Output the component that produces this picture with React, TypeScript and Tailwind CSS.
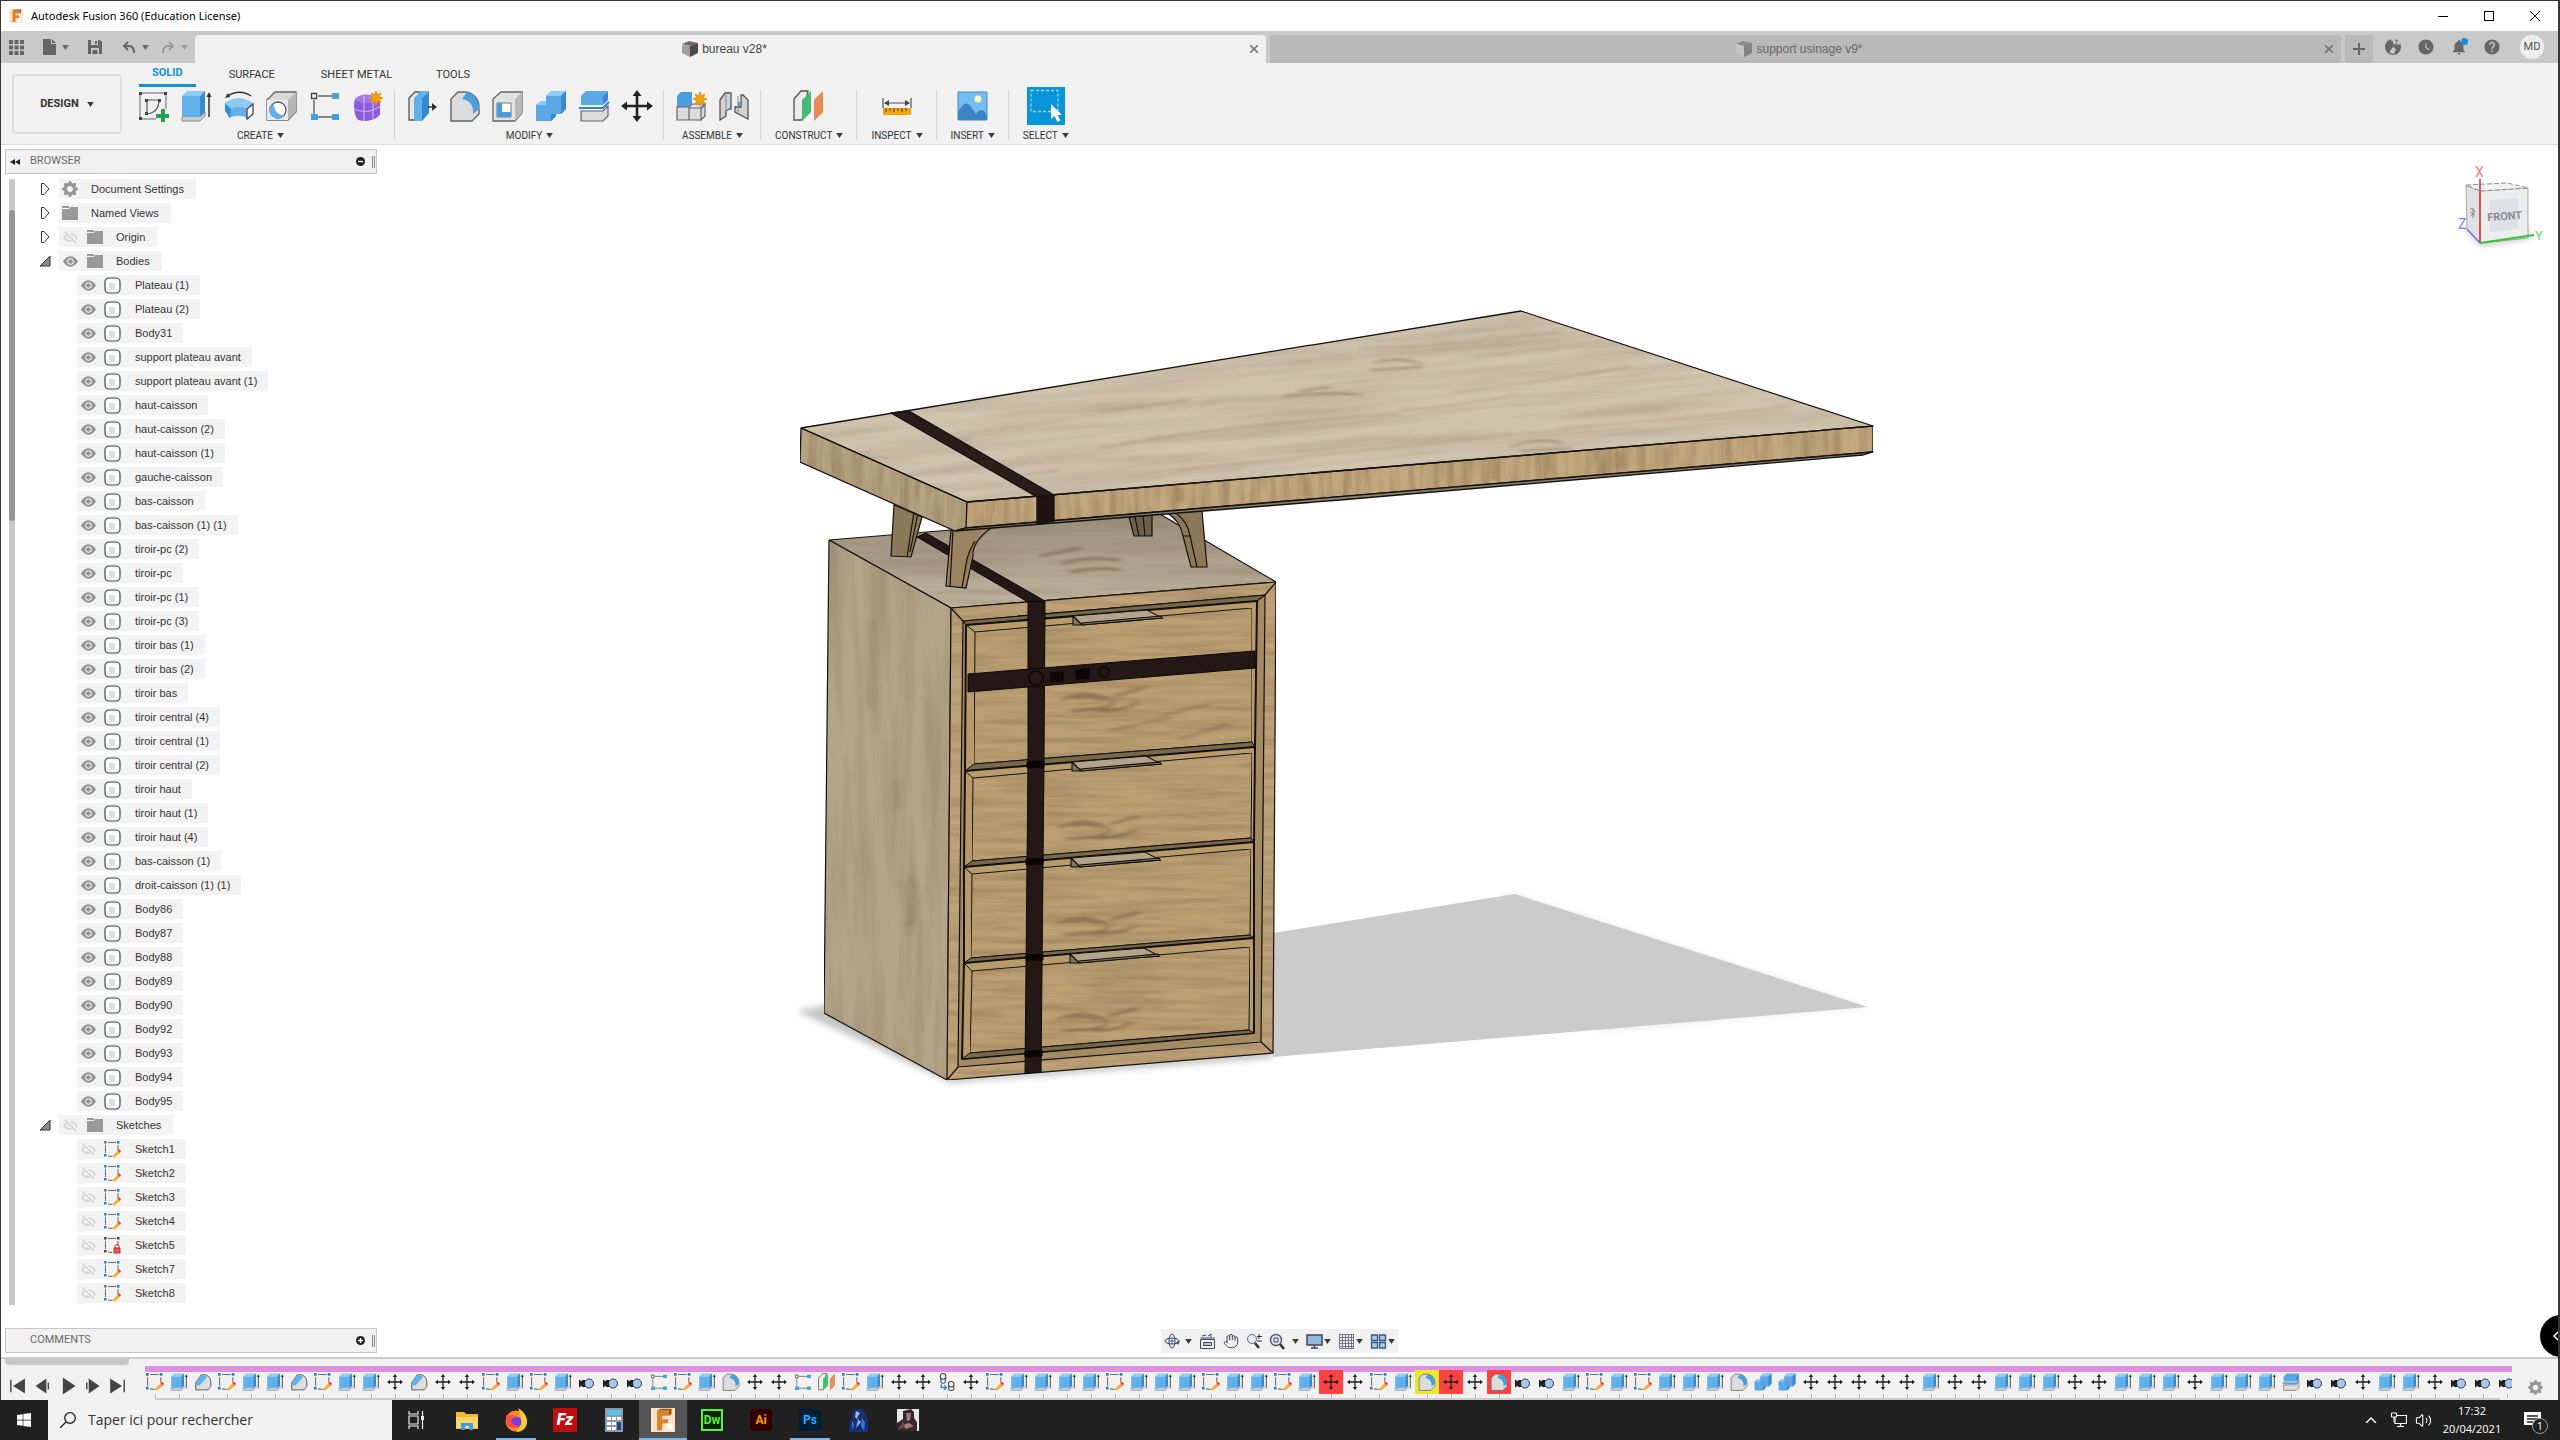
import type { ReactNode } from "react";
import { LuHand, LuVolume2 } from "react-icons/lu";
import { FaWindows } from "react-icons/fa";
import { BsGearFill, BsEyeFill } from "react-icons/bs";
import { MdHelp, MdNotifications, MdWatchLater } from "react-icons/md";

/* ---------- icons ---------- */

const Svg = ({ size = "size-8", box = "0 0 32 32", children }: { size?: string; box?: string; children: ReactNode }) => (
  <svg viewBox={box} className={`${size} shrink-0`} fill="none" aria-hidden="true">
    {children}
  </svg>
);

const Caret = ({ color = "text-[#3c3c3c]" }: { color?: string }) => (
  <svg viewBox="0 0 8 6" className={`h-[5px] w-[7px] shrink-0 ${color}`} aria-hidden="true">
    <path d="M0 0h8L4 6z" fill="currentColor" />
  </svg>
);

const Burst = ({ x, y, r = 7 }: { x: number; y: number; r?: number }) => (
  <g transform={`translate(${x} ${y}) scale(${r / 8})`}>
    <path
      d="M0-8 1.6-3.6 5.6-5.6 3.8-1.6 8 0 3.8 1.6 5.6 5.6 1.6 3.6 0 8-1.6 3.6-5.6 5.6-3.8 1.6-8 0-3.8-1.6-5.6-5.6-1.6-3.6z"
      fill="#f0a30a"
      stroke="#e0910a"
    />
  </g>
);

const BigSketch = () => (
  <Svg>
    <path d="M3 3h26v16M3 3v26h16" stroke="#666" strokeWidth="1" />
    <path d="M10 10h14M10 10v15M22 10c0 8-4 13-12 14" stroke="#555" strokeWidth="1.2" />
    <path d="M2 2h3v3H2zM27 2h3v3h-3zM2 27h3v3H2zM8 9h3v3H8zM21 9h3v3h-3zM8 22h3v3H8z" fill="#444" />
    <path d="M24 19h4v5h5v4h-5v5h-4v-5h-5v-4h5z" fill="#23a04b" />
  </Svg>
);

const Extrude = ({ size }: { size?: string }) => (
  <Svg size={size}>
    <path d="M2 27v4h18l5-5v-4z" fill="#ccc" stroke="#8a8a8a" />
    <path d="M2 6v21h18V6z" fill="#63b1ea" />
    <path d="M2 6l5-5h18l-5 5z" fill="#8ccbf5" />
    <path d="M20 6l5-5v21l-5 5z" fill="#3689cf" />
    <path d="M29 27V4" stroke="#333" strokeWidth="1.5" />
    <path d="M26.500 7L29 2l2.500 5z" fill="#333" />
  </Svg>
);

const Revolve = () => (
  <Svg>
    <path d="M2 13c8-6 19-6 28 0l-2 5-4 10c-5-3-12-3-18 0z" fill="#63b1ea" />
    <path d="M2 13c8-6 19-6 28 0l-6 6c-5-3-11-3-16 0z" fill="#8ccbf5" />
    <path d="M30 14l-6 5v10l6-5z" fill="#fff" stroke="#444" strokeWidth="1.3" />
    <path d="M2 13l6 6-1 9-5-7z" fill="#3689cf" />
    <path d="M5 6c7-5 16-5 23 0" stroke="#333" strokeWidth="1.3" />
    <path d="M2 8l3-5 2 4z" fill="#333" />
  </Svg>
);

const Hole = () => (
  <Svg>
    <path d="M1 10l8-8h21v20l-8 8H1z" fill="#d9d9d9" stroke="#666" strokeWidth="1.3" />
    <path d="M1 10h21v20H1z" fill="#e9e9e9" />
    <path d="M22 10l8-8v20l-8 8z" fill="#b5b5b5" />
    <circle cx="12" cy="20" r="8" fill="#fff" stroke="#555" strokeWidth="1.3" />
    <path d="M8 13.500c0 7 3 11 10 12A8 8 0 1 1 8 13.500z" fill="#63b1ea" />
  </Svg>
);

const Pattern = ({ size }: { size?: string }) => (
  <Svg size={size}>
    <path d="M9 6h14M5 10v14M9 27h14" stroke="#666" strokeWidth="1.4" />
    <path d="M2.500 3.500h5v5h-5z" fill="#fff" stroke="#444" strokeWidth="1.4" />
    <path d="M23 3h7v6h-7zM2 24h7v6H2zM23 24h7v6h-7z" fill="#4a9edd" />
  </Svg>
);

const Form = () => (
  <Svg>
    <path d="M3 9c5-6 17-6 25 0v15c-3 6-14 8-21 6-5-2-6-16-4-21z" fill="#a578e6" />
    <path d="M3 10c5 4 12 4 17 2l8-4v16c-3 6-14 8-21 6-5-2-5-16-4-20z" fill="#8e5cdb" />
    <path d="M2 19c7 3 14 3 19 1l8-4M12 6v25M21 8v22" stroke="#d5bdf7" strokeWidth="1" />
    <Burst x={24} y={8} />
  </Svg>
);

const PressPull = () => (
  <Svg>
    <path d="M3 8l6-6h5v28H3z" fill="#e6e6e6" stroke="#555" strokeWidth="1.3" />
    <path d="M8 8l7-7h8l-7 7v23H8z" fill="#63b1ea" />
    <path d="M16 8l7-7v22l-7 8z" fill="#3689cf" />
    <path d="M22 17h6" stroke="#333" strokeWidth="1.4" />
    <path d="M26 13l5 4-5 4z" fill="#333" />
  </Svg>
);

const Fillet = ({ size }: { size?: string }) => (
  <Svg size={size}>
    <path d="M2 9l7-7h7c9 1 14 7 14 15v7l-7 7H2z" fill="#dcdcdc" stroke="#666" strokeWidth="1.4" />
    <path d="M13 9l5-7c8 2 12 8 12 17l-6 5c1-9-4-14-11-15z" fill="#4a9edd" />
  </Svg>
);

const Chamfer = ({ size }: { size?: string }) => (
  <Svg size={size}>
    <path d="M3 17L13 3h8c5 2 9 7 9 13v8l-5 6H3z" fill="#dedede" stroke="#555" strokeWidth="1.6" />
    <path d="M3 17L13 3h6l4 4-13 15H3z" fill="#63b1ea" />
  </Svg>
);

const Shell = () => (
  <Svg>
    <path d="M1 9l8-7h21v21l-7 8H1z" fill="#e3e3e3" stroke="#666" strokeWidth="1.3" />
    <path d="M23 9l7-7v21l-7 8z" fill="#b9b9b9" />
    <path d="M5 13h14v14H5z" fill="#fff" stroke="#777" />
    <path d="M5 13h5v9h9v5H5z" fill="#4a9edd" />
  </Svg>
);

const Combine = ({ size }: { size?: string }) => (
  <Svg size={size}>
    <path d="M1 15l5-4h5V6l5-5h15v18l-5 5h-5v2l-5 5H1z" fill="#5aa9e6" />
    <path d="M11 6l5-5h15l-5 5zM1 15l5-4h5v4z" fill="#8ccbf5" />
    <path d="M26 6l5-5v18l-5 5zM21 24v2l-5 5v-7z" fill="#3689cf" />
  </Svg>
);

const Split = ({ size }: { size?: string }) => (
  <Svg size={size}>
    <path d="M3 6l5-5h22l-5 5v9H3z" fill="#5aa9e6" />
    <path d="M25 6l5-5v9l-5 5z" fill="#3689cf" />
    <path d="M1 18h24l6-6" stroke="#2e86cc" strokeWidth="2" />
    <path d="M3 21h22l5-5v10l-5 5H3z" fill="#dcdcdc" stroke="#666" strokeWidth="1.2" />
  </Svg>
);

const Move = ({ size }: { size?: string }) => (
  <Svg size={size}>
    <path d="M16 4v24M4 16h24" stroke="#222" strokeWidth="2.600" />
    <path d="M16 0l4.500 6h-9zM16 32l4.500-6h-9zM0 16l6-4.500v9zM32 16l-6-4.500v9z" fill="#222" />
  </Svg>
);

const Component = () => (
  <Svg>
    <path d="M2 6l4-4h11v12l-4 3H2z" fill="#4a9edd" />
    <path d="M2 17h12v13H2zM14 17l3-3h13l-3 4H14zM14 18h12v12H14zM26 18l4-4v12l-4 4z" fill="#dcdcdc" stroke="#666" strokeWidth="1.200" />
    <Burst x={25} y={9} />
  </Svg>
);

const Joint = () => (
  <Svg>
    <path d="M2 10l5-7h6v15l-5 3v5l-6 4zM30 10l-5-5-2 0v12h-6v5l13 7z" fill="#d2d2d2" stroke="#555" strokeWidth="1.300" />
    <path d="M8 5v17M20 6v16" stroke="#888" />
    <path d="M13 15v5M21 12v5" stroke="#2e86cc" strokeWidth="1.400" />
  </Svg>
);

const Plane = ({ size }: { size?: string }) => (
  <Svg size={size}>
    <path d="M1 9l7-8h7L9 30H1z" fill="#ececec" stroke="#555" strokeWidth="1.3" />
    <path d="M9 10l9-9v21l-9 9z" fill="#45bb74" />
    <path d="M21 10l9-9v21l-9 9z" fill="#e58b56" />
  </Svg>
);

const Measure = () => (
  <Svg>
    <path d="M2 8v10M30 8v10M4 13h24" stroke="#555" strokeWidth="1.2" />
    <path d="M3 13l5-3v6zM29 13l-5-3v6z" fill="#444" />
    <path d="M2 18h28v7H2z" fill="#f2a50c" />
    <path d="M5 18v4M9 18v3M13 18v4M17 18v3M21 18v4M25 18v3" stroke="#744f07" strokeWidth="1.200" />
  </Svg>
);

const Picture = () => (
  <Svg>
    <path d="M1 2h29v28H1z" fill="#74bdf2" stroke="#4a89b8" />
    <path d="M1 22c5-9 9-11 13-5l5 7c3-5 7-6 11 1v5H1z" fill="#3d85c2" />
    <circle cx="21" cy="9" r="3.500" fill="#fdf6c0" />
  </Svg>
);

const SelectIcon = () => (
  <Svg size="size-[38px]" box="0 0 38 38">
    <path d="M0 0h38v38H0z" fill="#0a93d9" />
    <path d="M4 3.500h27v21H4z" stroke="#8fe3c0" strokeDasharray="3 2" strokeWidth="1.300" />
    <path d="M24 17v15l3.500-3 3 6 3-1.500-3-5.500h4.500z" fill="#fff" />
  </Svg>
);

const SketchIcon = ({ size = "size-[17px]", locked = false }: { size?: string; locked?: boolean }) => (
  <Svg size={size} box="0 0 17 17">
    <path d="M4 1.500h8M1.500 4v8M4 15l4 .5M14 4v5" stroke="#666" strokeWidth="1" />
    <path d="M0 0h2.500v2.500H0zM13 0h2.500v2.500H13zM0 13h2.500v2.500H0z" fill={locked ? "#444" : "#2b7fc4"} />
    {locked ? (
      <>
        <path d="M10 16h6v-5h-6z" fill="#e8605a" stroke="#b52a25" />
        <path d="M11 11V9.500c0-2.500 4-2.500 4 0V11" stroke="#b52a25" />
      </>
    ) : (
      <>
        <path d="M9 14.500l4.500-4.500 2.500 2-5 4-3 .5z" fill="#f3ae3d" />
        <path d="M13.500 10l1.500-2 2 2-1 2z" fill="#e2473c" />
      </>
    )}
  </Svg>
);

const HoleMark = ({ size }: { size?: string }) => (
  <Svg size={size}>
    <circle cx="20" cy="19" r="9" fill="#a9c8ee" stroke="#334" strokeWidth="2" />
    <path d="M0 11l6 4v-3h6v14H6v-3l-6 4z" fill="#222" />
  </Svg>
);

const CopyMark = ({ size }: { size?: string }) => (
  <Svg size={size}>
    <circle cx="9" cy="6" r="5" stroke="#444" strokeWidth="1.800" />
    <path d="M5 9v7c0 3 8 3 8 0V9M19 22v6c0 4 9 4 9 0v-6" stroke="#444" strokeWidth="1.800" />
    <circle cx="23.500" cy="20" r="5" stroke="#444" strokeWidth="1.800" />
    <path d="M6 20v6h8M11 22l4 4-4 4" stroke="#2b7fc4" strokeWidth="2.500" />
  </Svg>
);

const BodyIcon = () => (
  <Svg size="size-[17px]" box="0 0 17 17">
    <rect x="1" y="1" width="15" height="15" rx="4" fill="#fdfdfd" stroke="#414956" strokeWidth="1.200" />
    <path d="M5 6h6v7H5z" fill="#dcdfe4" />
  </Svg>
);

const FolderIcon = () => (
  <Svg size="size-4" box="0 0 16 16">
    <path d="M0 1h7v2H0zM0 4h7l1-2h8v13H0z" fill="#9a9a9a" />
  </Svg>
);

const CubeIcon = ({ faded = false }: { faded?: boolean }) => (
  <Svg size="size-4" box="0 0 16 16">
    <path d="M0 3l7-3 9 2-8 3z" fill={faded ? "#8b8b8b" : "#6b6b6b"} />
    <path d="M0 3l8 2v11l-8-4z" fill={faded ? "#c4c4c4" : "#a0a0a0"} />
    <path d="M8 5l8-3v10l-8 4z" fill={faded ? "#858585" : "#4a4a4a"} />
  </Svg>
);

/* ---------- title and tab bars ---------- */

const FusionLogo = ({ size }: { size: string }) => (
  <Svg size={size} box="0 0 28 28">
    <path d="M0 0h28v28H0z" fill="#fde3cb" />
    <path d="M7 3h14v6h-8v4h7v5h-7v8H7z" fill="#d9822b" />
    <path d="M7 3l4-2h13l-3 2zM21 3l3-2v6l-3 2z" fill="#9c5414" />
    <path d="M18 18h7v7h-7z" fill="#fff7ee" />
  </Svg>
);

const TitleBar = () => (
  <header className="flex h-[30px] shrink-0 items-center bg-white pl-2">
    <FusionLogo size="size-[14px]" />
    <h1 className="ml-2 flex-1 font-['Noto_Sans',sans-serif] text-[11px] text-black">
      Autodesk Fusion 360 (Education License)
    </h1>
    <div className="flex items-center gap-[14px] pr-[7px] text-black">
      <button aria-label="Minimize" className="flex size-8 items-center justify-center">
        <span className="h-px w-[10px] bg-black" />
      </button>
      <button aria-label="Maximize" className="flex size-8 items-center justify-center">
        <span className="size-[10px] border border-black" />
      </button>
      <button aria-label="Close" className="flex size-8 items-center justify-center">
        <Svg size="size-[10px]" box="0 0 10 10">
          <path d="M0 0l10 10M10 0L0 10" stroke="#000" />
        </Svg>
      </button>
    </div>
  </header>
);

const DocTab = ({ name, active = false }: { name: string; active?: boolean }) => (
  <div
    className={`mt-1 flex h-7 flex-1 items-center rounded-t-sm px-[6px] text-xs ${
      active ? "bg-[#f1f1f1] text-[#444]" : "bg-[#b9b9b9] text-[#666]"
    }`}
  >
    <button className="flex flex-1 items-center justify-center gap-1">
      <CubeIcon faded={!active} />
      {name}
    </button>
    <button aria-label={`Close ${name}`} className="p-[2px]">
      <Svg size="size-2" box="0 0 8 8">
        <path d="M0 0l8 8M8 0L0 8" stroke="#777" strokeWidth="1.600" />
      </Svg>
    </button>
  </div>
);

const TabBar = () => (
  <nav className="flex h-8 shrink-0 bg-[#c9c9c9] text-[#666]">
    <div className="flex w-[194px] items-center pl-2">
      <button aria-label="Data panel" className="w-[34px]">
        <Svg size="size-[15px]" box="0 0 15 15">
          <path d="M0 0h4v4H0zM5.500 0h4v4h-4zM11 0h4v4h-4zM0 5.500h4v4H0zM5.500 5.500h4v4h-4zM11 5.500h4v4h-4zM0 11h4v4H0zM5.500 11h4v4h-4zM11 11h4v4h-4z" fill="#666" />
        </Svg>
      </button>
      <button aria-label="File" className="flex w-[45px] items-center gap-[6px]">
        <Svg size="h-4 w-[13px]" box="0 0 13 16">
          <path d="M0 0h8v5h5v11H0zM9 0l4 4H9z" fill="#666" />
        </Svg>
        <Caret color="text-[#666]" />
      </button>
      <button aria-label="Save" className="w-[34px]">
        <Svg size="size-[14px]" box="0 0 14 14">
          <path d="M0 0h12l2 2v12H0z" fill="#666" />
          <path d="M3 0h7v5H3zM3 8h8v6H3z" fill="#c9c9c9" />
          <path d="M7 1h2v3H7zM4.500 10h5v4h-5z" fill="#666" />
        </Svg>
      </button>
      <button aria-label="Undo" className="flex w-[39px] items-center gap-[6px]">
        <Svg size="h-3 w-[14px]" box="0 0 14 12">
          <path d="M6 1L2 5l4 4M2 5h5c4 0 5 3 5 7" stroke="#666" strokeWidth="2" />
        </Svg>
        <Caret color="text-[#666]" />
      </button>
      <button aria-label="Redo" className="flex items-center gap-[6px]">
        <Svg size="h-3 w-[14px]" box="0 0 14 12">
          <path d="M8 1l4 4-4 4M12 5H7c-4 0-5 3-5 7" stroke="#999" strokeWidth="2" />
        </Svg>
        <Caret color="text-[#999]" />
      </button>
    </div>
    <div className="flex flex-1 gap-1">
      <DocTab name="bureau v28*" active />
      <DocTab name="support usinage v9*" />
      <button aria-label="New tab" className="mt-1 flex h-7 w-7 items-center justify-center bg-[#b9b9b9]">
        <Svg size="size-3" box="0 0 12 12">
          <path d="M6 0v12M0 6h12" stroke="#666" strokeWidth="2" />
        </Svg>
      </button>
    </div>
    <div className="flex w-[185px] items-center gap-[15px] pl-[11px]">
      <button aria-label="Extensions">
        <Svg size="size-[18px]" box="0 0 18 18">
          <circle cx="9" cy="9" r="8" fill="#666" />
          <path d="M9 9L7 1h4l1 3 3-1 2 3-5 1zM6 13l3-4 3 2-2 5-4-1z" fill="#c9c9c9" />
          <path d="M8 3l1 5 4-3" stroke="#666" strokeWidth="1.500" />
        </Svg>
      </button>
      <button aria-label="Job status">
        <MdWatchLater size={18} />
      </button>
      <button aria-label="Notifications" className="relative">
        <MdNotifications size={18} />
        <span className="absolute top-0 right-0 size-[7px] rounded-full bg-[#1c8fd6]" />
      </button>
      <button aria-label="Help">
        <MdHelp size={18} />
      </button>
      <button className="ml-1 size-6 rounded-full bg-[#eee] font-[Roboto,sans-serif] text-[11px] text-[#555]">MD</button>
    </div>
  </nav>
);

/* ---------- ribbon ---------- */

const groups: { label: string; icons: ReactNode[] }[] = [
  { label: "CREATE", icons: [<BigSketch />, <Extrude />, <Revolve />, <Hole />, <Pattern />, <Form />] },
  { label: "MODIFY", icons: [<PressPull />, <Fillet />, <Shell />, <Combine />, <Split />, <Move />] },
  { label: "ASSEMBLE", icons: [<Component />, <Joint />] },
  { label: "CONSTRUCT", icons: [<Plane />] },
  { label: "INSPECT", icons: [<Measure />] },
  { label: "INSERT", icons: [<Picture />] },
  { label: "SELECT", icons: [<SelectIcon />] },
];

const Ribbon = () => (
  <section className="flex h-[82px] shrink-0 border-b border-[#dcdcdc] bg-[#f1f1f1] font-[Roboto,sans-serif] text-[#333]">
    <div className="w-[125px] pt-[11px] pl-[11px]">
      <button className="flex h-[60px] w-[110px] items-center justify-center gap-2 rounded border-2 border-[#dedede] text-[11px] font-bold">
        DESIGN <Caret />
      </button>
    </div>
    <div>
      <div className="flex h-6 gap-5 pl-[13px] text-[11px]">
        <button className="border-b-3 border-[#1492cf] px-[13px] font-bold text-[#1492cf]">SOLID</button>
        <button className="px-[13px]">SURFACE</button>
        <button className="px-[13px]">SHEET METAL</button>
        <button className="px-[11px]">TOOLS</button>
      </div>
      <div className="flex">
        {groups.map((g) => (
          <div key={g.label} className="relative flex flex-col items-center px-[11px]">
            <div className="flex h-[38px] items-center gap-[11px]">
              {g.icons.map((icon, i) => (
                <button key={i} aria-label={`${g.label} ${i + 1}`}>
                  {icon}
                </button>
              ))}
            </div>
            <button className="flex h-5 items-center gap-1 px-[3px] text-[10px]">
              {g.label} <Caret />
            </button>
            {g.label !== "SELECT" && <span className="absolute top-[3px] right-0 h-[50px] w-px bg-[#d4d4d4]" />}
          </div>
        ))}
      </div>
    </div>
  </section>
);

/* ---------- browser tree ---------- */

const bodies = [
  "Plateau (1)", "Plateau (2)", "Body31", "support plateau avant", "support plateau avant (1)",
  "haut-caisson", "haut-caisson (2)", "haut-caisson (1)", "gauche-caisson", "bas-caisson",
  "bas-caisson (1) (1)", "tiroir-pc (2)", "tiroir-pc", "tiroir-pc (1)", "tiroir-pc (3)",
  "tiroir bas (1)", "tiroir bas (2)", "tiroir bas", "tiroir central (4)", "tiroir central (1)",
  "tiroir central (2)", "tiroir haut", "tiroir haut (1)", "tiroir haut (4)", "bas-caisson (1)",
  "droit-caisson (1) (1)", "Body86", "Body87", "Body88", "Body89", "Body90", "Body92", "Body93",
  "Body94", "Body95",
];
const sketches = ["Sketch1", "Sketch2", "Sketch3", "Sketch4", "Sketch5", "Sketch7", "Sketch8"];

const Eye = ({ on }: { on: boolean }) => (
  <button aria-label="Toggle visibility" className="flex w-[22px] justify-center">
    {on ? (
      <BsEyeFill size={15} className="text-[#959595]" />
    ) : (
      <Svg size="size-[15px]" box="0 0 15 15">
        <path d="M1 8c3-5 10-5 13 0-3 4-10 4-13 0z" stroke="#d6d6d6" strokeWidth="1.800" />
        <path d="M3 2l10 11" stroke="#f3f3f3" strokeWidth="4" />
        <path d="M2 2l11 11" stroke="#d0d0d0" strokeWidth="1.600" />
      </Svg>
    )}
  </button>
);

const Arrow = ({ open = false }: { open?: boolean }) => (
  <button aria-label={open ? "Collapse" : "Expand"} className="flex w-6 shrink-0 justify-center">
    <Svg size="size-3" box="0 0 12 12">
      {open ? (
        <path d="M11 1v10H1z" fill="#8c8c8c" stroke="#333" />
      ) : (
        <path d="M2.500.5L5 .5l5 5.500-5 5.500H2.500z" fill="#fff" stroke="#333" />
      )}
    </Svg>
  </button>
);

const Root = ({ name, icon, open, eye }: { name: string; icon: ReactNode; open?: boolean; eye?: boolean }) => (
  <li className="flex h-6 items-center pl-[18px]">
    <Arrow open={open} />
    <div className="ml-[2px] flex h-5 items-center bg-[#f3f3f3] pr-3">
      {eye !== undefined && <Eye on={eye} />}
      <span className={`flex w-[22px] justify-center ${eye !== undefined ? "ml-[3px]" : ""}`}>{icon}</span>
      <span className="ml-[10px]">{name}</span>
    </div>
  </li>
);

const Leaf = ({ name, icon, eye }: { name: string; icon: ReactNode; eye: boolean }) => (
  <li className="flex h-6 items-center pl-[62px]">
    <div className="flex h-5 items-center bg-[#f3f3f3] pr-[11px]">
      <Eye on={eye} />
      <span className="mx-[5px]">{icon}</span>
      <span className="ml-[9px]">{name}</span>
    </div>
  </li>
);

const PanelHeader = ({ title, open }: { title: string; open: boolean }) => (
  <div className="ml-1 flex h-[25px] w-[372px] shrink-0 items-center border border-[#c6c6c6] bg-[#f1f1f1] pl-1 text-[#6a6a6a]">
    <span className="w-5">
      {open && (
        <Svg size="h-[6px] w-[10px]" box="0 0 10 6">
          <path d="M5 0v6L0 3zM10 0v6L5 3z" fill="#222" />
        </Svg>
      )}
    </span>
    <h2 className="flex-1 font-[Roboto,sans-serif] text-[11px]">{title}</h2>
    <button aria-label={`Toggle ${title}`}>
      <Svg size="size-[9px]" box="0 0 9 9">
        <circle cx="4.500" cy="4.500" r="4.500" fill="#222" />
        <path d={open ? "M2 4.500h5" : "M2 4.500h5M4.500 2v5"} stroke="#fff" strokeWidth="1.300" />
      </Svg>
    </button>
    <span className="mr-px ml-[7px] h-3 w-[3px] border-x border-[#888]" />
  </div>
);

const Browser = () => (
  <aside className="relative z-10 flex h-full w-[380px] flex-col pt-1 pb-1 text-[11px] text-[#333]">
    <PanelHeader title="BROWSER" open />
    <div className="mt-[3px] flex min-h-0 flex-1">
      <div className="mt-[2px] mb-[23px] ml-2 w-[6px] shrink-0 bg-[#c9c9c9] pt-[31px]">
        <div className="h-[311px] rounded-full bg-[#979797]" />
      </div>
      <ul className="overflow-hidden">
        <Root name="Document Settings" icon={<BsGearFill size={16} className="text-[#959595]" />} />
        <Root name="Named Views" icon={<FolderIcon />} />
        <Root name="Origin" icon={<FolderIcon />} eye={false} />
        <Root name="Bodies" icon={<FolderIcon />} eye open />
        {bodies.map((b) => (
          <Leaf key={b} name={b} icon={<BodyIcon />} eye />
        ))}
        <Root name="Sketches" icon={<FolderIcon />} eye={false} open />
        {sketches.map((s) => (
          <Leaf key={s} name={s} icon={<SketchIcon locked={s === "Sketch5"} />} eye={false} />
        ))}
      </ul>
    </div>
    <PanelHeader title="COMMENTS" open={false} />
  </aside>
);

/* ---------- desk model ---------- */

const drawers = [
  { panel: "975,632 1252,608 1252,742 974,764", outer: "966,625 1257,601 1255,747 965,771", sep: "974,764 1252,742 1255,747 965,771", handle: [1073, 616], knot: [1062, 700] },
  { panel: "973,778 1252,753 1251,838 972,861", outer: "965,771 1255,747 1254,842 964,867", sep: "972,861 1251,838 1254,842 964,867", handle: [1072, 762], knot: [1058, 828] },
  { panel: "972,874 1251,849 1250,935 971,958", outer: "964,867 1254,842 1254,938 964,963", sep: "971,958 1250,935 1254,938 964,963", handle: [1071, 858], knot: [1058, 924] },
  { panel: "972,971 1250,947 1249,1030 970,1053", outer: "964,963 1254,938 1254,1033 962,1059", sep: "970,1053 1249,1030 1254,1033 962,1059", handle: [1070, 954], knot: [1056, 1020] },
];

const Grain = ({ id, freq, seed, strength }: { id: string; freq: string; seed: number; strength: number }) => (
  <filter id={id} x="0" y="0" width="100%" height="100%" colorInterpolationFilters="sRGB">
    <feTurbulence type="fractalNoise" baseFrequency={freq} numOctaves="4" seed={seed} result="n" />
    <feColorMatrix in="n" type="matrix" values={`0 0 0 0 .32  0 0 0 0 .24  0 0 0 0 .16  ${strength} 0 0 0 ${-strength * 0.36}`} result="g" />
    <feComposite in="g" in2="SourceGraphic" operator="in" result="c" />
    <feMerge>
      <feMergeNode in="SourceGraphic" />
      <feMergeNode in="c" />
    </feMerge>
  </filter>
);

const Desk = () => (
  <svg viewBox="1 145 2557 1212" className="absolute inset-0 size-full" role="img" aria-label="Desk model">
    <defs>
      <Grain id="grain-top" freq="0.005 0.09" seed={4} strength={0.35} />
      <Grain id="grain-front" freq="0.012 0.16" seed={11} strength={0.45} />
      <Grain id="grain-side" freq="0.07 0.006" seed={7} strength={0.35} />
      <Grain id="grain-edge" freq="0.1 0.012" seed={3} strength={0.6} />
      <filter id="soft" x="-10%" y="-10%" width="120%" height="120%">
        <feGaussianBlur stdDeviation="3" />
      </filter>
      <filter id="knot" x="-50%" y="-50%" width="200%" height="200%">
        <feGaussianBlur stdDeviation="3 1" />
      </filter>
      <clipPath id="top-face">
        <path d="M801 428L1521 311 1873 426 967 502z" />
      </clipPath>
      <linearGradient id="cab-top" x1="0" y1="0" x2="0" y2="1">
        <stop offset="0" stopColor="#978a76" />
        <stop offset=".35" stopColor="#a99c88" />
        <stop offset="1" stopColor="#c2b6a1" />
      </linearGradient>
    </defs>

    {/* ground shadow */}
    <path d="M1260 935L1515 894 1868 1007 1273 1057z" fill="#cbcbcb" />
    <path d="M1500 896L1515 894 1868 1007 1600 1031z" fill="#cbcbcb" filter="url(#soft)" opacity=".4" />
    <path d="M797 1011L830 1004 950 1076 1273 1050 1273 1058 950 1083z" fill="#c4c4c4" filter="url(#soft)" />

    {/* cabinet */}
    <g stroke="#111" strokeWidth="1.200" strokeLinejoin="round">
      <path d="M829 540L1158 513 1276 582 951 608z" fill="url(#cab-top)" filter="url(#grain-top)" />
      <path d="M829 540L951 608 947 1080 824 1013z" fill="#b4a588" filter="url(#grain-side)" />
      <path d="M951 608L1276 582 1273 1053 947 1080z" fill="#bfa278" filter="url(#grain-front)" />
      <path d="M963 621L1265 595 1261 1042 958 1067z" fill="#a48a62" />
      <path d="M951 608l12 13M1276 582l-11 13M947 1080l11-13M1273 1053l-12-11" />
      <path d="M963 621L1265 595 1257 601 966 625z" fill="#77674b" />
      {drawers.map((d) => (
        <g key={d.panel}>
          <polygon points={d.outer} fill="#b99b6b" strokeWidth="2" />
          <polygon points={d.panel} fill="#bca073" filter="url(#grain-front)" strokeWidth="1" />
          <polygon points={d.sep} fill="#77674b" strokeWidth="1" />
        </g>
      ))}
      <path d="M966 625l9 7M965 771l8 7M964 867l8 7M964 963l8 8" strokeWidth="1" />
    </g>

    {/* darker figure in the wood */}
    <g stroke="#58432b" fill="none" strokeWidth="3" filter="url(#knot)" opacity=".4">
      {drawers.map(({ knot: [x, y] }) => (
        <path
          key={y}
          d={`M${x} ${y}q22-10 42-3t-6 12l-28 2M${x + 12} ${y - 2}q18-4 28 2M${x + 34} ${y + 10}q22 2 44-8M${x + 52} ${y - 4}l30-8`}
        />
      ))}
      <path d="M1160 716l50-12M1110 730l60-12M1178 740l50-16" opacity=".6" />
      <path d="M900 880q10 26 6 56M912 876q4 30-2 50M898 780v30M870 620v90" opacity=".7" />
      <path d="M1062 564q20-8 58-4M1070 572q30-6 50-2M1040 556l40-8" />
    </g>

    {/* dark inlay */}
    <g fill="#231815" stroke="#0c0706" strokeWidth="1">
      <path d="M917 537L926 533 1045 601 1028 602z" />
      <path d="M1028 602L1045 601 1044 760 1041 1072 1025 1073 1028 760z" />
      <path d="M968 674L1255 651 1255 668 968 692z" />
      <path d="M1027 762l17-1v6l-17 1zM1026 859l17-1v6l-17 1zM1026 955l17-1v6l-17 1zM1025 1051l17-1v6l-17 1z" fill="#080505" />
      <g fill="#0d0807" strokeWidth="1.500">
        <circle cx="1036" cy="678" r="7" fill="none" />
        <path d="M1051 673l12-1v9l-12 1zM1076 670l13-1v9l-13 1z" />
        <circle cx="1104" cy="672" r="5" fill="none" />
      </g>
    </g>

    {/* handles */}
    {drawers.map(({ handle: [x, y] }) => (
      <g key={y} stroke="#111" strokeWidth="1.100">
        <path d={`M${x} ${y}l74-6 15 8-80 7z`} fill="#b3a388" />
        <path d={`M${x} ${y}l9 9h-9zM${x + 9} ${y + 9}l80-7-1-2-79 7z`} fill="#82745e" />
      </g>
    ))}

    {/* legs */}
    <g stroke="#15110c" strokeWidth="1.200" fill="#8d7859">
      <path d="M894 505L922 517 911 557 891 556z" />
      <path d="M914 512L907 557M918 513L910 552" />
      <path d="M951 530L991 528Q972 542 973 556L966 588 946 586z" fill="#9a8462" />
      <path d="M953 530L950 586M975 541Q968 552 966 564L962 588" />
      <path d="M1129 517L1152 515 1152 536 1134 536z" fill="#6f5f49" />
      <path d="M1135 517l4 19M1143 516l2 20" />
      <path d="M1167 513L1202 511 1207 567 1191 567 1183 536Q1180 520 1167 513z" />
      <path d="M1176 513Q1188 522 1190 536L1197 567M1183 536h8" />
    </g>

    {/* table top */}
    <g clipPath="url(#top-face)">
      <rect x="700" y="260" width="1300" height="500" fill="#d1c4af" filter="url(#grain-top)" transform="rotate(-5 1300 450)" />
      <g stroke="#76604a" fill="none" strokeWidth="2" filter="url(#knot)" opacity=".45">
        <path d="M1285 396q40-5 76-1M1300 391l30-4M1372 370l50-3M1376 362q20-6 46 2M1510 447q28-10 52-4M1520 451l50-3" />
        <path d="M1450 392q90-8 180-26M1400 410q60-4 120-16M1100 448q140-26 300-34M1180 470q180-20 420-44M1560 428q120-8 230-22M1360 348q100-2 200-16M1480 356l30-2" opacity=".45" />
        <path d="M940 441l30-2M1020 476l40-6M1100 412l90-12" opacity=".6" />
      </g>
    </g>
    <g stroke="#111" strokeWidth="1.300" strokeLinejoin="round">
      <path d="M801 428L967 502 966 528 955 531 800 462z" fill="#b7a481" filter="url(#grain-edge)" />
      <path d="M967 502L1873 426 1873 452 966 528z" fill="#c4a87e" filter="url(#grain-edge)" />
      <path d="M955 531L966 528 1873 452 1863 455 1340 500z" fill="#8a7d69" />
      <path d="M801 428L1521 311 1873 426 967 502z" fill="none" />
      <path d="M891 413L909 411 1054 495 1037 497z" fill="#2a1c18" />
      <path d="M1037 497L1054 495 1054 521 1037 524z" fill="#1d1412" />
    </g>
    <g stroke="#5c452a" strokeWidth="5" filter="url(#knot)" opacity=".35">
      <path d="M1305 476l3 20M1493 460l2 20M1666 448l2 18M1620 452l1 16M1180 488v14" />
    </g>
  </svg>
);

const ViewCube = () => (
  <svg viewBox="0 0 90 90" className="absolute top-[17px] right-[13px] size-[90px]" role="img" aria-label="View cube">
    <defs>
      <filter id="cube-shadow" x="-20%" y="-20%" width="140%" height="140%">
        <feGaussianBlur stdDeviation="3" />
      </filter>
    </defs>
    <path d="M9 66l17 18 50-8-8-14z" fill="#999" filter="url(#cube-shadow)" opacity=".6" />
    <path d="M11 23l14 6v52L12 67z" fill="#e0e1e5" stroke="#888" strokeWidth=".7" />
    <path d="M25 29l48-3v50l-48 5z" fill="#eceded" stroke="#888" strokeWidth=".7" />
    <path d="M11 23l41-2 21 5-48 3z" fill="#f2f2f3" stroke="#777" strokeDasharray="5 2" strokeWidth=".8" />
    <path d="M35 38l28-2v31l-28 3z" fill="#dfe0e6" />
    <path d="M15 46l5 3-4 5M18 46v10M15 50l5 3" stroke="#888" fill="none" />
    <path d="M25 17v64" stroke="#e0343a" strokeWidth="1.600" />
    <path d="M25 81l54-8" stroke="#35c23d" strokeWidth="1.800" />
    <path d="M12 67l13 14" stroke="#6f6fd0" strokeWidth="1.400" />
    <g className="font-[Roboto,sans-serif]">
      <text x="20" y="15" fontSize="14" fill="#f47a7a">X</text>
      <text x="3" y="67" fontSize="14" fill="#7d7df0">Z</text>
      <text x="80" y="78" fontSize="13" fill="#5fe06a">Y</text>
      <text x="32" y="58" fontSize="11" fontWeight="700" fill="#8b8d94" transform="rotate(-4 50 53)">FRONT</text>
    </g>
  </svg>
);

const NavBar = () => (
  <div className="absolute bottom-1 left-[1160px] flex h-6 w-[237px] items-center justify-between bg-[#f1f1f1] px-[3px] text-[#3d4654]">
    <button aria-label="Orbit" className="flex items-center gap-1">
      <Svg size="size-[17px]" box="0 0 17 17">
        <ellipse cx="8" cy="8" rx="3" ry="7" stroke="#445" />
        <ellipse cx="8" cy="8" rx="7" ry="3" stroke="#445" />
        <path d="M8 5v6M5 8h6" stroke="#2b7fc4" />
        <path d="M12 9l4-1-2 4z" fill="#445" />
      </Svg>
      <Caret />
    </button>
    <button aria-label="Look at">
      <Svg size="size-[17px]" box="0 0 17 17">
        <path d="M1.500 6.500h14v9h-14zM1.500 5h14M3 3l4-1M9 3l3-2v3" stroke="#445" />
        <path d="M4.500 9.500h8v3h-8z" fill="#a9c8ee" stroke="#445" />
      </Svg>
    </button>
    <button aria-label="Pan">
      <LuHand size={16} strokeWidth={1.5} />
    </button>
    <button aria-label="Zoom">
      <Svg size="size-[17px]" box="0 0 17 17">
        <circle cx="6" cy="6" r="4.500" fill="#e3ecf7" stroke="#667" />
        <path d="M9 10l4 5" stroke="#333" strokeWidth="2.500" />
        <path d="M13 1v5M11 3.500h5M11 8h5" stroke="#333" />
      </Svg>
    </button>
    <button aria-label="Fit" className="flex items-center gap-[6px]">
      <Svg size="size-[17px]" box="0 0 17 17">
        <circle cx="7" cy="7" r="5.500" fill="#e3ecf7" stroke="#556" strokeWidth="1.400" />
        <path d="M5 5h4v4H5z" stroke="#445" />
        <path d="M11 11l4 5" stroke="#333" strokeWidth="2.500" />
      </Svg>
      <Caret />
    </button>
    <button aria-label="Display settings" className="flex items-center gap-px">
      <Svg size="size-[17px]" box="0 0 17 17">
        <path d="M1 2h15v10H1z" fill="#8fb9dd" stroke="#445" strokeWidth="1.500" />
        <path d="M5 15h7M8.500 12v3" stroke="#445" strokeWidth="1.500" />
      </Svg>
      <Caret />
    </button>
    <button aria-label="Grid" className="flex items-center gap-px">
      <Svg size="size-[17px]" box="0 0 17 17">
        <path d="M1 1.500h15M1 4.500h15M1 7.500h15M1 10.500h15M1 15.500h15M1.500 1v15M4.500 1v15M7.500 1v15M10.500 1v15M15.500 1v15M13.500 1v15M1 13.500h15" stroke="#778" />
      </Svg>
      <Caret />
    </button>
    <button aria-label="Viewports" className="flex items-center gap-px">
      <Svg size="size-[17px]" box="0 0 17 17">
        <path d="M1.500 2h6v5.500h-6zM9.500 2h6v5.500h-6zM1.500 9.500h6V15h-6zM9.500 9.500h6V15h-6z" fill="#a9c8ee" stroke="#38587f" strokeWidth="1.300" />
      </Svg>
      <Caret />
    </button>
  </div>
);

/* ---------- timeline ---------- */

type Kind = "S" | "E" | "C" | "M" | "H" | "P" | "F" | "L" | "J" | "B" | "T";
const small = "size-[18px]";
const kinds: Record<Kind, ReactNode> = {
  S: <SketchIcon size={small} />,
  E: <Extrude size={small} />,
  C: <Chamfer size={small} />,
  M: <Move size="size-4" />,
  H: <HoleMark size="size-4" />,
  P: <Pattern size={small} />,
  F: <Fillet size={small} />,
  L: <Plane size={small} />,
  J: <CopyMark size={small} />,
  B: <Combine size={small} />,
  T: <Split size={small} />,
};
const steps = (
  "SECSEECSEEMCMMSESEHHHPSEFMMPLS" +
  "EMMJMSEEEESEEESEESEMMSEFMMFHHESESEEE" +
  "FBBMMMMMEMMEEEMMEEEMEEETHHMEEMHHH"
).split("") as Kind[];
const marks: Record<number, string> = { 49: "bg-[#fd4242]", 53: "bg-[#e9e930]", 54: "bg-[#fd4242]", 56: "bg-[#fd4242]" };

const playback = [
  { label: "Go to start", d: "M1 2v14M16 2L5 9l11 7z" },
  { label: "Step back", d: "M15 5v8M12 2L2 9l10 7z" },
  { label: "Play", d: "M4 1l12 8L4 17z" },
  { label: "Step forward", d: "M2 5v8M5 2l10 7L5 16z" },
  { label: "Go to end", d: "M16 2v14M1 2l11 7L1 16z" },
];

const Timeline = () => (
  <footer className="flex h-[43px] shrink-0 border-t-2 border-[#cbcbcb] bg-[#f1f1f1]">
    <div className="w-[142px] shrink-0 pl-1">
      <div className="h-[6px] w-[124px] rounded-b bg-[#c6c6c6]" />
      <div className="mt-[13px] flex gap-[9px] pl-[5px]">
        {playback.map((p) => (
          <button key={p.label} aria-label={p.label}>
            <Svg size="size-4" box="0 0 18 18">
              <path d={p.d} fill="#444" stroke="#444" strokeWidth="1.600" />
            </Svg>
          </button>
        ))}
      </div>
    </div>
    <div className="relative mt-[7px] min-w-0 flex-1 overflow-hidden">
      <div className="ml-[2px] h-[6px] bg-[#df90e1]" />
      <ol className="relative -mt-[2px] flex">
        {steps.map((k, i) => (
          <li key={i} className="flex w-6 shrink-0 flex-col items-center">
            <button aria-label={`Step ${i + 1}`} className={`flex h-6 w-6 items-center justify-center ${marks[i] ?? ""}`}>
              {kinds[k]}
            </button>
            <span className="h-1 w-px bg-[#b9b9b9]" />
          </li>
        ))}
      </ol>
      <div className="mx-3 h-[2px] bg-[#cbcbcb]" />
    </div>
    <div className="flex w-[46px] items-center justify-center pt-4">
      <button aria-label="Timeline settings">
        <BsGearFill size={15} className="text-[#959595]" />
      </button>
    </div>
  </footer>
);

/* ---------- windows task bar ---------- */

const Tile = ({ label, color, border, bg }: { label: string; color: string; border: string; bg: string }) => (
  <span className={`flex size-[22px] items-center justify-center font-[Roboto,sans-serif] text-xs font-bold ${color} ${border} ${bg}`}>
    {label}
  </span>
);

const apps: { name: string; icon: ReactNode; mark?: string }[] = [
  {
    name: "Explorer",
    icon: (
      <Svg size="size-[22px]" box="0 0 22 22">
        <path d="M0 3h8l2 2h12v15H0z" fill="#f5b92f" />
        <path d="M0 8h22v11H0z" fill="#fcd667" />
        <path d="M5 21v-7h12v7h-4v-4H9v4z" fill="#3d9be0" />
      </Svg>
    ),
  },
  {
    name: "Firefox",
    mark: "w-10",
    icon: (
      <Svg size="size-6" box="0 0 24 24">
        <circle cx="12" cy="13" r="10.500" fill="#ff8a1c" />
        <path d="M14 0c6 4 9 8 9 14 0 5-4 10-11 10C16 20 20 14 14 0z" fill="#ffce2e" />
        <circle cx="12" cy="14" r="5.500" fill="#7a3be0" />
        <path d="M2 8c2-2 6-2 9 1l-4 3c0 4 4 6 8 5-3 5-11 4-13-3z" fill="#ff4f3e" />
      </Svg>
    ),
  },
  {
    name: "FileZilla",
    icon: (
      <span className="flex size-6 items-center justify-center bg-[#bf0d0d] font-[Roboto,sans-serif] text-base font-black text-white italic">Fz</span>
    ),
  },
  {
    name: "Calculator",
    icon: (
      <Svg size="h-6 w-[18px]" box="0 0 18 24">
        <path d="M0 0h18v24H0z" fill="#8d99a8" />
        <path d="M2 2h14v5H2z" fill="#55c6ef" />
        <path d="M2 9h4v3H2zM7 9h4v3H7zM12 9h4v3h-4zM2 14h4v3H2zM7 14h4v3H7zM2 19h4v3H2zM7 19h4v3H7z" fill="#fff" />
        <path d="M12 14h4v8h-4z" fill="#174a80" />
      </Svg>
    ),
  },
  { name: "Fusion 360", mark: "w-full", icon: <FusionLogo size="size-6" /> },
  { name: "Dreamweaver", icon: <Tile label="Dw" color="text-[#5cf23a]" border="border-2 border-[#5cf23a]" bg="bg-[#072401]" /> },
  { name: "Illustrator", icon: <Tile label="Ai" color="text-[#ff9a00]" border="rounded" bg="bg-[#330000]" /> },
  { name: "Photoshop", mark: "w-10", icon: <Tile label="Ps" color="text-[#31a8ff]" border="rounded" bg="bg-[#001e36]" /> },
  {
    name: "Game",
    icon: (
      <Svg size="size-6" box="0 0 24 24">
        <path d="M7 1h8l3 4 3 7v12H2l1-10z" fill="#142f74" />
        <path d="M9 3l4 2-3 5 4 4-5 6 2-8-3-3z" fill="#8fb8f2" />
        <path d="M15 9l3 6-1 8-3-5zM5 12l2 5-2 5z" fill="#3f74d1" />
      </Svg>
    ),
  },
  {
    name: "Portrait",
    icon: (
      <Svg size="size-6" box="0 0 24 24">
        <path d="M1 1h22v22H1z" fill="#e9e6ea" />
        <path d="M7 3l8-2 3 3v6l3 4v9H1v-8l6-4z" fill="#35262f" />
        <path d="M10 5h5l-1 7-3 1zM6 17l7-2 5 3-8 3z" fill="#a17e7a" />
        <path d="M2 22l5-9 2 6z" fill="#6d4a50" />
      </Svg>
    ),
  },
];

const TaskBar = () => (
  <footer className="flex h-10 shrink-0 items-center bg-[#202020] font-['Open_Sans',sans-serif] text-white">
    <button aria-label="Start" className="flex h-10 w-12 items-center justify-center">
      <FaWindows size={16} />
    </button>
    <label className="flex h-10 w-[344px] items-center gap-3 bg-[#f2f2f2] pl-3 text-[#333]">
      <Svg size="size-4" box="0 0 16 16">
        <circle cx="10" cy="6" r="5.300" stroke="#222" strokeWidth="1.300" />
        <path d="M6 10l-6 6" stroke="#222" strokeWidth="1.300" />
      </Svg>
      <input
        aria-label="Taper ici pour rechercher"
        placeholder="Taper ici pour rechercher"
        className="w-full bg-transparent text-sm outline-none placeholder:text-[#333]"
      />
    </label>
    <button aria-label="Task view" className="flex h-10 w-12 items-center justify-center">
      <Svg size="size-[18px]" box="0 0 18 18">
        <path d="M2 5h9v8H2zM2 0v3h9V0M2 18v-3h9v3M15.500 0v18" stroke="#eee" strokeWidth="1.200" />
        <path d="M14 5h3v4h-3z" fill="#eee" />
      </Svg>
    </button>
    <div className="flex flex-1 gap-px pl-[3px]">
      {apps.map((a) => (
        <button
          key={a.name}
          aria-label={a.name}
          className={`relative flex h-10 w-12 items-center justify-center ${a.name === "Fusion 360" ? "bg-[#555]" : ""}`}
        >
          {a.icon}
          {a.mark && <span className={`absolute bottom-0 h-[2px] bg-[#76b9ed] ${a.mark}`} />}
        </button>
      ))}
    </div>
    <div className="flex items-center gap-2 pr-2">
      <button aria-label="Hidden icons" className="mr-[6px]">
        <Svg size="h-[6px] w-3" box="0 0 12 6">
          <path d="M1 6l5-5 5 5" stroke="#fff" strokeWidth="1.400" />
        </Svg>
      </button>
      <Svg size="size-4" box="0 0 16 16">
        <path d="M4 3.500h11.500v8H4zM9.500 11.500v3M6 14.500h7" stroke="#fff" strokeWidth="1.200" />
        <path d="M.5 1h5v4h-5zM3 5v5" stroke="#fff" fill="#202020" />
      </Svg>
      <LuVolume2 size={17} strokeWidth={1.5} />
      <div className="w-16 text-center text-[11px] leading-[18px]">
        <p>17:32</p>
        <p>20/04/2021</p>
      </div>
      <button aria-label="Notifications" className="relative ml-3 h-7 w-7">
        <Svg size="size-[17px]" box="0 0 17 17">
          <path d="M0 0h17v13h-4v4l-4-4H0z" fill="#fff" />
          <path d="M3 4h11M3 7h11M3 10h6" stroke="#222" strokeWidth="1.300" />
        </Svg>
        <span className="absolute right-1 bottom-0 flex size-4 items-center justify-center rounded-full border border-[#999] bg-[#202020] text-[11px]">
          1
        </span>
      </button>
    </div>
  </footer>
);

const App = () => {
  return (
    <div className="flex h-screen flex-col overflow-hidden bg-white font-['Liberation_Sans',sans-serif]">
      <div className="flex min-h-0 flex-1 flex-col border-t border-r-2 border-l border-[#3a3538]">
        <TitleBar />
        <TabBar />
        <Ribbon />
        <main className="relative min-h-0 flex-1 overflow-hidden bg-white">
          <Desk />
          <Browser />
          <ViewCube />
          <NavBar />
          <button
            aria-label="Open side panel"
            className="absolute -right-6 bottom-0 flex size-[42px] items-center rounded-full bg-black pl-3 text-lg text-white"
          >
            <Svg size="h-3 w-2" box="0 0 8 12">
              <path d="M7 1L2 6l5 5" stroke="#fff" strokeWidth="1.500" />
            </Svg>
          </button>
        </main>
        <Timeline />
      </div>
      <TaskBar />
    </div>
  );
};

export default App;
